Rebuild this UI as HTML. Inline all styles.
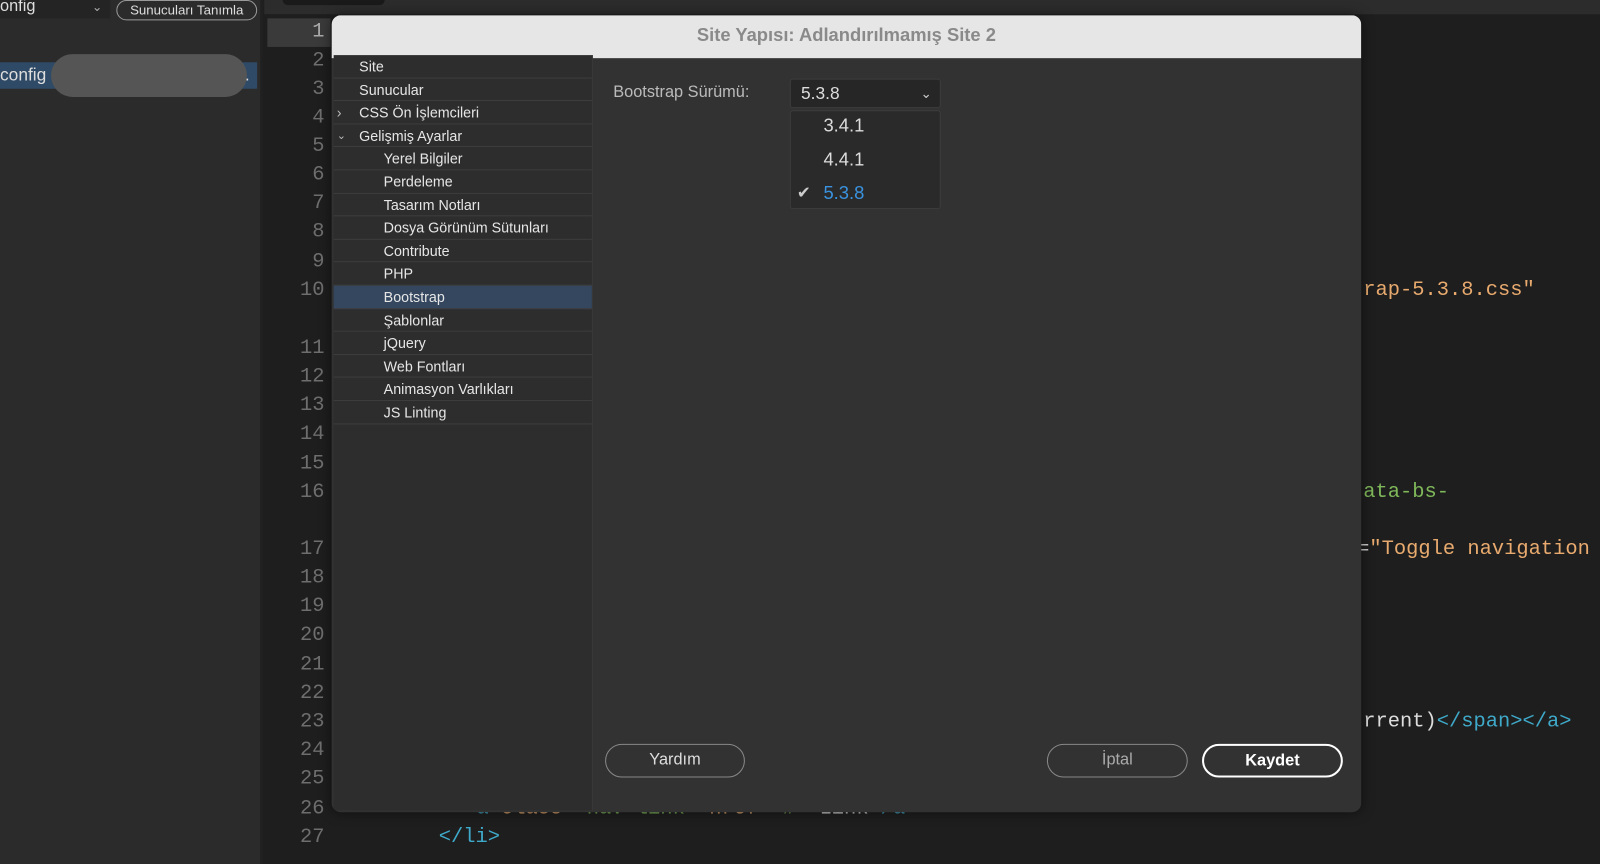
<!DOCTYPE html>
<html><head><meta charset="utf-8"><style>
*{margin:0;padding:0;box-sizing:border-box}
html,body{width:1600px;height:847px;overflow:hidden;background:#1e1e1e}
#wrap{position:absolute;left:0;top:0;width:1568px;height:830px;transform:scale(1.0204);transform-origin:0 0;font-family:"Liberation Sans",sans-serif}
.abs{position:absolute}
.left{left:0;top:0;width:257px;height:847px;background:#2b2b2b;border-right:2px solid #202020}
.topbar{left:259px;top:0;width:1341px;height:14px;background:#2c2c2c}
.gut{left:262px;top:14px;width:62px;height:833px;background:#1e1e1e}
.ln{position:absolute;right:0;width:60px;text-align:right;padding-right:6px;font-family:"Liberation Mono",monospace;font-size:20px;color:#6e6e6e;line-height:28px}
.code{font-family:"Liberation Mono",monospace;font-size:20px;line-height:28px;position:absolute;white-space:pre}
.dlg{left:325px;top:15px;width:1009px;height:781px;background:#323232;border-radius:9px;overflow:hidden;box-shadow:0 0 12px rgba(0,0,0,.5)}
.title{height:42px;background:#e6e6e6;text-align:center;font-weight:bold;font-size:18px;color:#8a8a8a;line-height:38px}
.side{position:absolute;left:2px;top:39px;width:254px;height:740px;background:#2d2d2d;border-right:1px solid #3a3a3a}
.it{height:22.6px;border-bottom:1px solid #3d3d3d;color:#e6e6e6;font-size:14px;line-height:22px;padding-left:25px;position:relative}
.it.s{padding-left:49px}
.it.sel{background:#34475f}
.btn{position:absolute;height:33px;border:1.5px solid #888;border-radius:17px;color:#ddd;font-size:16px;text-align:center;line-height:30px}
</style></head><body><div id="wrap">
<div class="abs left">
  <div class="abs" style="left:0;top:0;width:108px;height:18px;background:#242424;color:#ddd;font-size:16px;line-height:14px">onfig<span style="position:absolute;left:90px;color:#aaa;font-size:12px">&#8964;</span></div>
  <div class="abs" style="left:114px;top:0;width:138px;height:20px;border:1px solid #999;border-radius:10px;color:#ddd;font-size:13px;text-align:center;line-height:18px">Sunucuları Tanımla</div>
  <div class="abs" style="left:0;top:61px;width:252px;height:26px;background:#2f4a66;color:#ddd;font-size:17px;line-height:26px">config (<span style="position:absolute;left:240px">.</span></div>
  <div class="abs" style="left:50px;top:53px;width:192px;height:42px;border-radius:21px;background:#555"></div>
</div>
<div class="abs topbar"><div class="abs" style="left:18px;top:0;width:100px;height:5px;background:#1a1a1a;border-radius:0 0 8px 8px"></div></div>
<div class="abs gut">
<div class="abs" style="left:0;top:4px;width:62px;height:28px;background:#3a3a3a"></div>
<div class="ln" style="top:4px;color:#aaa">1</div><div class="ln" style="top:32px">2</div><div class="ln" style="top:60px">3</div><div class="ln" style="top:88px">4</div><div class="ln" style="top:116px">5</div><div class="ln" style="top:144px">6</div><div class="ln" style="top:172px">7</div><div class="ln" style="top:200px">8</div><div class="ln" style="top:229px">9</div><div class="ln" style="top:257px">10</div><div class="ln" style="top:314px">11</div><div class="ln" style="top:342px">12</div><div class="ln" style="top:370px">13</div><div class="ln" style="top:398px">14</div><div class="ln" style="top:427px">15</div><div class="ln" style="top:455px">16</div><div class="ln" style="top:511px">17</div><div class="ln" style="top:539px">18</div><div class="ln" style="top:567px">19</div><div class="ln" style="top:595px">20</div><div class="ln" style="top:624px">21</div><div class="ln" style="top:652px">22</div><div class="ln" style="top:680px">23</div><div class="ln" style="top:708px">24</div><div class="ln" style="top:736px">25</div><div class="ln" style="top:765px">26</div><div class="ln" style="top:793px">27</div>
</div>
<div class="code" style="left:1336px;top:271px;color:#e8aa6e">rap-5.3.8.css"</div>
<div class="code" style="left:1336px;top:469px;color:#7fb85a">ata-bs-</div>
<div class="code" style="left:1330px;top:525px;color:#e8aa6e"><span style="color:#ccc">=</span>"Toggle navigation</div>
<div class="code" style="left:1336px;top:694px;color:#ddd">rrent)<span style="color:#3fa9c9">&lt;/span&gt;&lt;/a&gt;</span></div>
<div class="code" style="left:455px;top:779px;color:#3fa9c9">&lt;a <span style="color:#e8aa6e">class</span><span style="color:#ccc">=</span><span style="color:#7fb85a">"nav-link"</span> <span style="color:#e8aa6e">href</span>=<span style="color:#7fb85a">"#"</span>&gt;<span style="color:#ddd">Link</span>&lt;/a&gt;</div>
<div class="code" style="left:430px;top:807px;color:#3fa9c9">&lt;/li&gt;</div>

<div class="abs dlg">
  <div class="title">Site Yapısı: Adlandırılmamış Site 2</div>
  <div class="side">
    <div class="it">Site</div>
    <div class="it">Sunucular</div>
    <div class="it"><span style="position:absolute;left:3px;color:#bbb">›</span>CSS Ön İşlemcileri</div>
    <div class="it"><span style="position:absolute;left:3px;color:#bbb;font-size:11px">&#8964;</span>Gelişmiş Ayarlar</div>
    <div class="it s">Yerel Bilgiler</div>
    <div class="it s">Perdeleme</div>
    <div class="it s">Tasarım Notları</div>
    <div class="it s">Dosya Görünüm Sütunları</div>
    <div class="it s">Contribute</div>
    <div class="it s">PHP</div>
    <div class="it s sel">Bootstrap</div>
    <div class="it s">Şablonlar</div>
    <div class="it s">jQuery</div>
    <div class="it s">Web Fontları</div>
    <div class="it s">Animasyon Varlıkları</div>
    <div class="it s">JS Linting</div>
  </div>
  <div class="abs" style="left:276px;top:67px;color:#bbb;font-size:16px">Bootstrap Sürümü:</div>
  <div class="abs" style="left:449px;top:62px;width:148px;height:29px;background:#262626;border:1px solid #3c3c3c;border-radius:3px;color:#ddd;font-size:17px;line-height:27px;padding-left:10px">5.3.8<span style="position:absolute;right:8px;top:0;color:#ccc;font-size:13px">&#8964;</span></div>
  <div class="abs" style="left:449px;top:93px;width:148px;height:97px;background:#2a2a2a;border:1px solid #3c3c3c;border-radius:3px;font-size:18px">
    <div class="abs" style="left:32px;top:4px;color:#ddd">3.4.1</div>
    <div class="abs" style="left:32px;top:37px;color:#ddd">4.4.1</div>
    <div class="abs" style="left:6px;top:70px;color:#ccc;font-size:16px">✔</div>
    <div class="abs" style="left:32px;top:70px;color:#3a93e0">5.3.8</div>
  </div>
  <div class="btn" style="left:268px;top:714px;width:137px">Yardım</div>
  <div class="btn" style="left:701px;top:714px;width:138px;color:#aaa">İptal</div>
  <div class="btn" style="left:853px;top:714px;width:138px;border:2.5px solid #fff;color:#fff;font-weight:bold">Kaydet</div>
</div>
</div></body></html>
